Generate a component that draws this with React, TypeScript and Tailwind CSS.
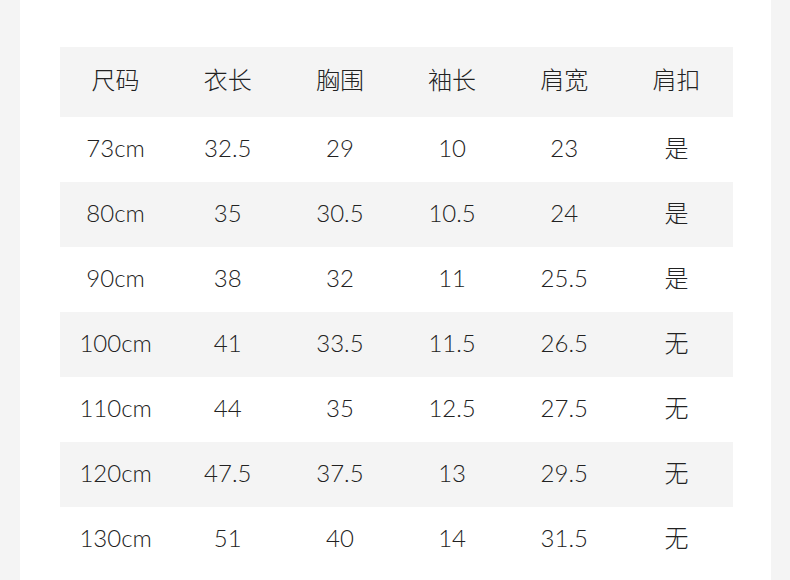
import React from "react";

const headers = ["尺码", "衣长", "胸围", "袖长", "肩宽", "肩扣"];
const rows = [
  ["73cm", "32.5", "29", "10", "23", "是"],
  ["80cm", "35", "30.5", "10.5", "24", "是"],
  ["90cm", "38", "32", "11", "25.5", "是"],
  ["100cm", "41", "33.5", "11.5", "26.5", "无"],
  ["110cm", "44", "35", "12.5", "27.5", "无"],
  ["120cm", "47.5", "37.5", "13", "29.5", "无"],
  ["130cm", "51", "40", "14", "31.5", "无"],
];

export default function App() {
  return (
    <div
      className="w-[790px] h-[580px] overflow-hidden bg-[#f4f4f4] flex justify-center"
      style={{ fontFamily: '"Lato", "Noto Sans CJK SC", sans-serif' }}
    >
      <div className="w-[751px] h-full bg-white pt-[47px] pl-[40px]">
        <div className="w-[673px] text-[#222] text-[24px] font-light">
          <div className="grid grid-cols-6 h-[70px] pb-[4px] bg-[#f4f4f4] items-center">
            {headers.map((h) => (
              <div key={h} className="text-center leading-none">{h}</div>
            ))}
          </div>
          {rows.map((r, i) => (
            <div
              key={i}
              className={`grid grid-cols-6 h-[65px] pb-[4px] items-center ${i % 2 === 1 ? "bg-[#f4f4f4]" : "bg-white"}`}
            >
              {r.map((c, j) => (
                <div key={j} className="text-center leading-none">{c}</div>
              ))}
            </div>
          ))}
        </div>
      </div>
    </div>
  );
}
